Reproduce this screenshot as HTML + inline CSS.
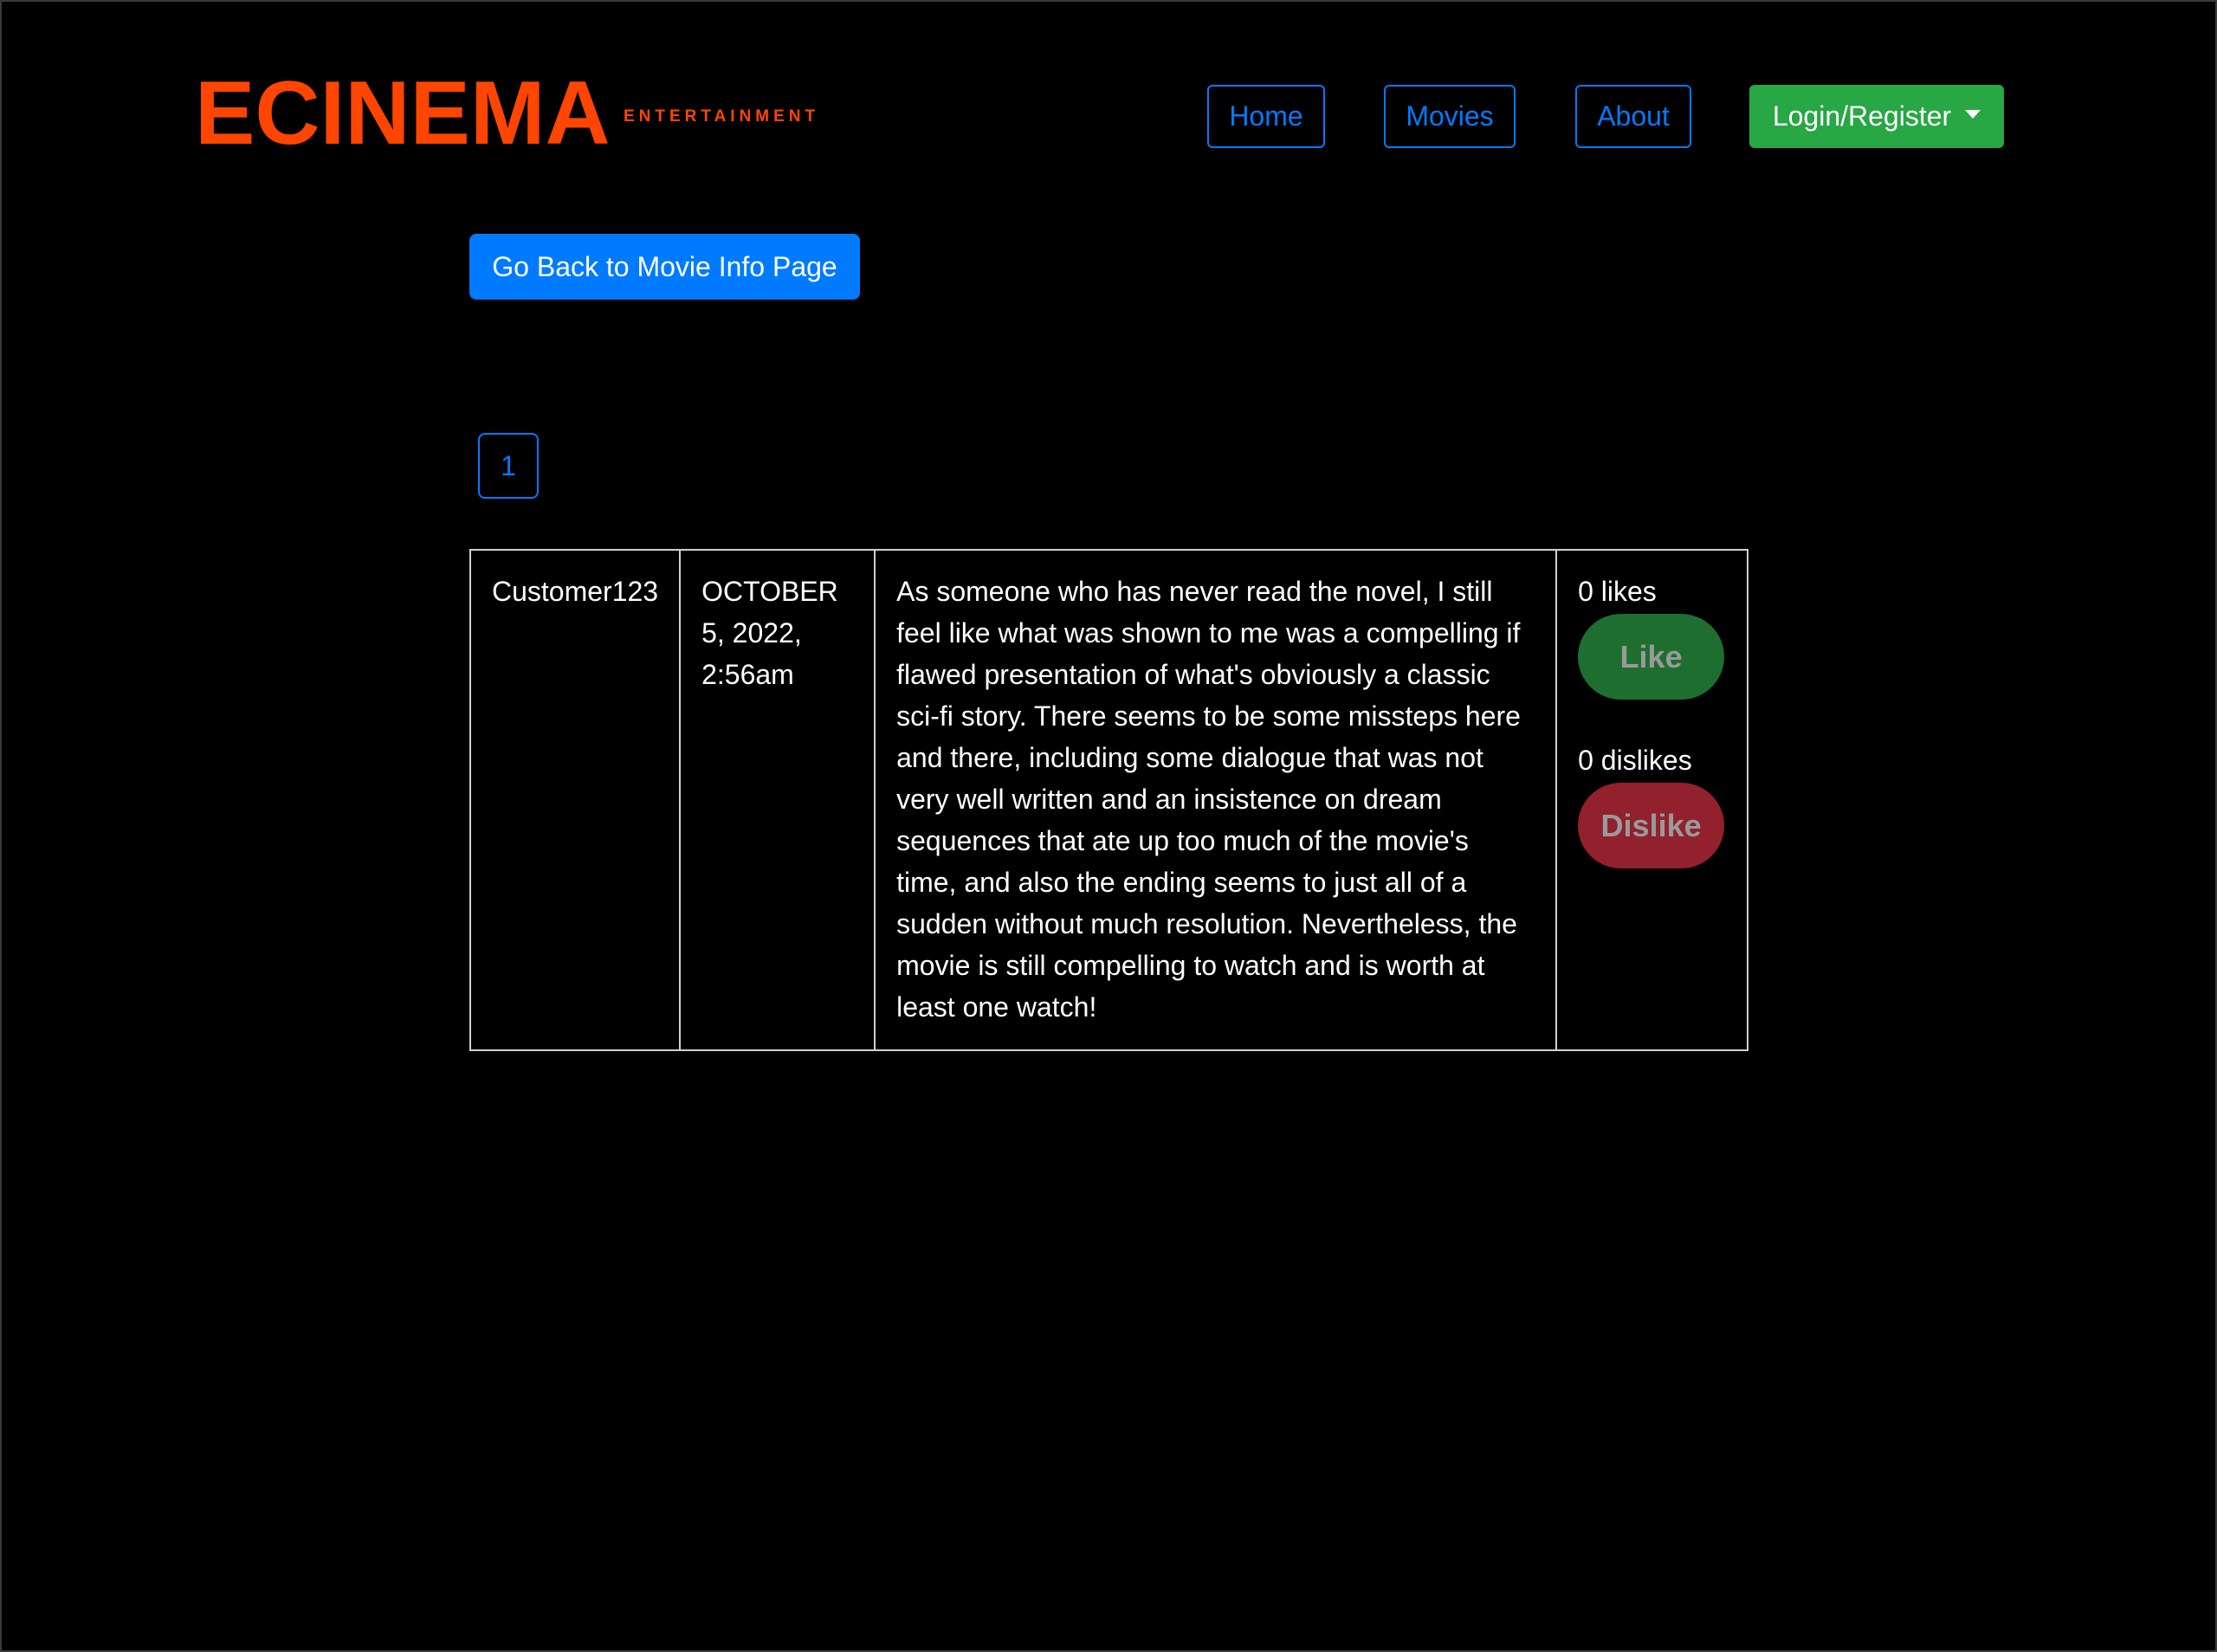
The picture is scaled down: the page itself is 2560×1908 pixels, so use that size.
<!DOCTYPE html>
<html><head><meta charset="utf-8"><style>
html,body{margin:0;padding:0}
body{width:2560px;height:1908px;background:#000;position:relative;overflow:hidden;font-family:"Liberation Sans",Arial,sans-serif;color:#fff;box-shadow:inset 0 0 0 2px #3a3a3a}
.abs{position:absolute;box-sizing:border-box}
.logo{left:225px;top:86px;font-family:"Liberation Sans Narrow","Liberation Sans",sans-serif;font-weight:bold;color:#ff4500;font-size:104px;line-height:90px;letter-spacing:0;transform-origin:left}
.ent{left:720px;top:124px;color:#ff4500;font-size:19px;font-weight:bold;letter-spacing:5px;font-family:"Liberation Sans Narrow","Liberation Sans",sans-serif}
.nav{border:2px solid #007bff;border-radius:6px;color:#007bff;font-size:32px;display:flex;align-items:center;justify-content:center;top:98px;height:73px}
.login{background:#28a745;border-radius:6px;color:#fff;font-size:32px;display:flex;align-items:center;justify-content:center;top:98px;height:73px;left:2020px;width:294px}
.caret{display:inline-block;width:0;height:0;border-left:9px solid transparent;border-right:9px solid transparent;border-top:10px solid #fff;margin-left:16px;margin-top:-6px}
.back{left:542px;top:270px;width:451px;height:76px;background:#007bff;border-radius:8px;color:#fff;font-size:32px;display:flex;align-items:center;justify-content:center}
.pg{left:552px;top:500px;width:70px;height:76px;border:2px solid #007bff;border-radius:8px;color:#007bff;font-size:32px;display:flex;align-items:center;justify-content:center}
table{position:absolute;left:542px;top:634px;border-collapse:collapse;width:1477px;height:580px}
td{border:2px solid #d0d0d0;vertical-align:top;padding:23px 24px 20px;font-size:32px;line-height:48px;color:#fff}
.btn{width:169px;height:99px;border-radius:50px;font-weight:bold;font-size:36px;color:#9a9a9a;display:flex;align-items:center;justify-content:center}
</style></head><body>
<div class="abs logo">ECINEMA</div>
<div class="abs ent">ENTERTAINMENT</div>
<div class="abs nav" style="left:1394px;width:136px">Home</div>
<div class="abs nav" style="left:1598px;width:152px">Movies</div>
<div class="abs nav" style="left:1819px;width:134px">About</div>
<div class="abs login">Login/Register<span class="caret"></span></div>
<div class="abs back">Go Back to Movie Info Page</div>
<div class="abs pg">1</div>
<table><tr>
<td style="width:192px">Customer123</td>
<td style="width:175px">OCTOBER 5, 2022, 2:56am</td>
<td style="width:737px">As someone who has never read the novel, I still feel like what was shown to me was a compelling if flawed presentation of what's obviously a classic sci-fi story. There seems to be some missteps here and there, including some dialogue that was not very well written and an insistence on dream sequences that ate up too much of the movie's time, and also the ending seems to just all of a sudden without much resolution. Nevertheless, the movie is still compelling to watch and is worth at least one watch!</td>
<td>0 likes<div class="btn" style="background:#1e6e30;margin-top:2px;margin-bottom:46px">Like</div>0 dislikes<div class="btn" style="background:#92202d;margin-top:2px">Dislike</div></td>
</tr></table>
</body></html>
